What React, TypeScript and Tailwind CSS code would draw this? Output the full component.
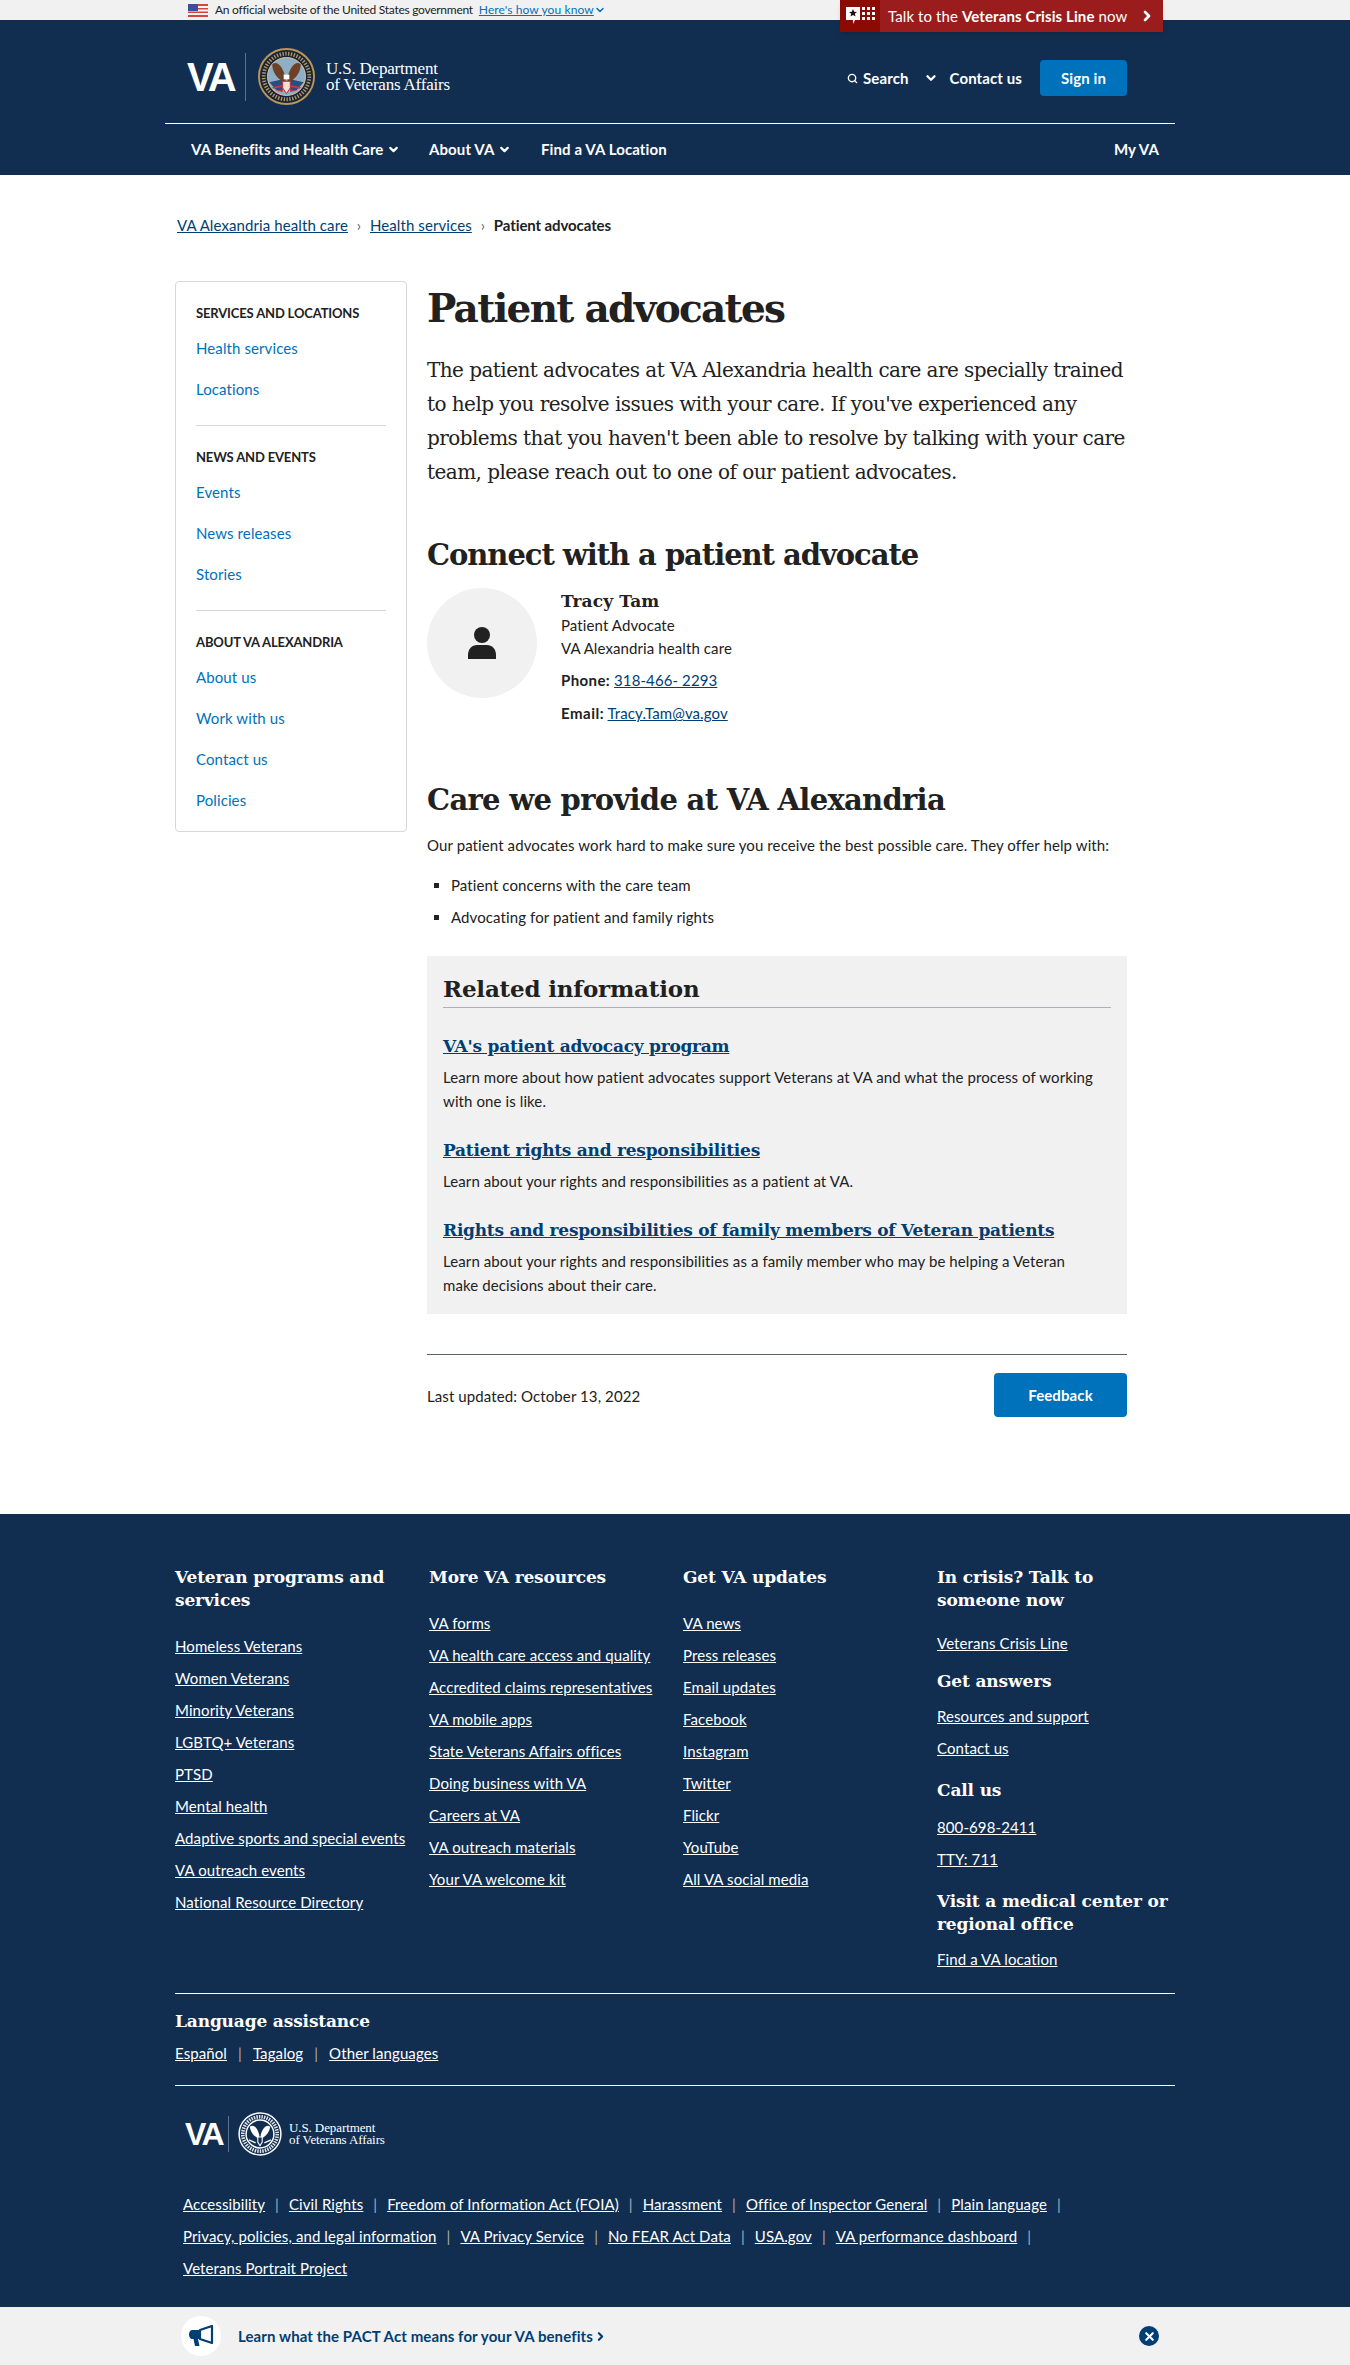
import { ChevronDown, ChevronRight, Search, X } from "lucide-react";

const sans = "font-['Lato','Noto_Sans',sans-serif]";
const slab = "font-['DejaVu_Serif',serif]";

const sideNav = [
  { title: "SERVICES AND LOCATIONS", links: ["Health services", "Locations"] },
  { title: "NEWS AND EVENTS", links: ["Events", "News releases", "Stories"] },
  { title: "ABOUT VA ALEXANDRIA", links: ["About us", "Work with us", "Contact us", "Policies"] },
];

const related = [
  {
    title: "VA's patient advocacy program",
    text: "Learn more about how patient advocates support Veterans at VA and what the process of working with one is like.",
  },
  {
    title: "Patient rights and responsibilities",
    text: "Learn about your rights and responsibilities as a patient at VA.",
  },
  {
    title: "Rights and responsibilities of family members of Veteran patients",
    text: "Learn about your rights and responsibilities as a family member who may be helping a Veteran make decisions about their care.",
  },
];

const programs = [
  "Homeless Veterans",
  "Women Veterans",
  "Minority Veterans",
  "LGBTQ+ Veterans",
  "PTSD",
  "Mental health",
  "Adaptive sports and special events",
  "VA outreach events",
  "National Resource Directory",
];
const resources = [
  "VA forms",
  "VA health care access and quality",
  "Accredited claims representatives",
  "VA mobile apps",
  "State Veterans Affairs offices",
  "Doing business with VA",
  "Careers at VA",
  "VA outreach materials",
  "Your VA welcome kit",
];
const updates = [
  "VA news",
  "Press releases",
  "Email updates",
  "Facebook",
  "Instagram",
  "Twitter",
  "Flickr",
  "YouTube",
  "All VA social media",
];
const legal = [
  ["Accessibility", "Civil Rights", "Freedom of Information Act (FOIA)", "Harassment", "Office of Inspector General", "Plain language"],
  ["Privacy, policies, and legal information", "VA Privacy Service", "No FEAR Act Data", "USA.gov", "VA performance dashboard"],
];

const ColorSeal = () => (
  <svg width="57" height="57" viewBox="0 0 60 60" className="shrink-0">
    <circle cx="30" cy="30" r="29" fill="#1a2233" stroke="#b8975a" strokeWidth="2" />
    <circle cx="30" cy="30" r="24" fill="none" stroke="#a89468" strokeWidth="4" strokeDasharray="1.5 1.5" />
    <circle cx="30" cy="30" r="20" fill="#8fb0c4" stroke="#d8c9a0" strokeWidth="1" />
    <path d="M12 36l14-3v13l-7-2zM48 36l-14-3v13l7-2z" fill="#2f4a7c" />
    <path d="M15 41l11-2v2l-10 2zM18 45l8-1v2zM45 41l-11-2v2l10 2zM42 45l-8-1v2z" fill="#c23a3a" />
    <path d="M29 31C26 19 20 13 15 17c0 8 5 15 11 18l3 2zM31 31c3-12 9-18 14-14 0 8-5 15-11 18l-3 2z" fill="#6e4025" />
    <path d="M27 28h6v5h-6z" fill="#ffffff" />
    <path d="M26 35h8v7l-4 6-4-6z" fill="#f1e4d2" stroke="#b3282d" strokeWidth="1" />
  </svg>
);

const MonoSeal = () => (
  <svg width="44" height="44" viewBox="0 0 60 60" className="shrink-0">
    <circle cx="30" cy="30" r="28.5" fill="#112e51" stroke="#ffffff" strokeWidth="2" />
    <circle cx="30" cy="30" r="23.5" fill="none" stroke="#dfe3e8" strokeWidth="5" strokeDasharray="2 1.5" />
    <circle cx="30" cy="30" r="19" fill="#112e51" stroke="#ffffff" strokeWidth="2" />
    <path d="M29 31C26 21 21 16 16 20c1 7 5 12 10 15l3 2zM31 31c3-10 8-15 13-11-1 7-5 12-10 15l-3 2z" fill="#ffffff" />
    <path d="M27 34h6v7l-3 5-3-5z" fill="#112e51" stroke="#ffffff" strokeWidth="1.500" />
    <path d="M15 38l9 4M45 38l-9 4" stroke="#ffffff" strokeWidth="2" />
  </svg>
);

const FlagIcon = () => (
  <svg width="20" height="13" viewBox="0 0 20 13" className="shrink-0">
    <rect width="20" height="13" fill="#f4f4f4" />
    <path d="M0 0h20v2H0zM0 4h20v1.500H0zM0 7.500h20V9H0zM0 11h20v2H0z" fill="#d8453c" />
    <rect width="10" height="7" fill="#3d4fa1" />
  </svg>
);

const CrisisIcon = () => (
  <svg width="29" height="20" viewBox="0 0 29 20">
    <path d="M0 1h14v13H9l-2 4v-4H0z" fill="#ffffff" />
    <path d="M7 3l1.200 2.700 2.800.2-2.200 1.800.8 2.800L7 9l-2.600 1.500.8-2.800L3 5.900l2.800-.2z" fill="#21100c" />
    <g fill="#ffffff">
      <rect x="16" y="1" width="3" height="3" /><rect x="21" y="1" width="3" height="3" /><rect x="26" y="1" width="3" height="3" />
      <rect x="16" y="6" width="3" height="3" /><rect x="21" y="6" width="3" height="3" /><rect x="26" y="6" width="3" height="3" />
      <rect x="16" y="11" width="3" height="3" /><rect x="21" y="11" width="3" height="3" /><rect x="26" y="11" width="3" height="3" />
    </g>
  </svg>
);

const PersonIcon = () => (
  <svg width="28" height="32" viewBox="0 0 28 32">
    <circle cx="14" cy="8" r="8" fill="#212121" />
    <path d="M0 32v-4c0-6 4-10 9-10h10c5 0 9 4 9 10v4z" fill="#212121" />
  </svg>
);

const BullhornIcon = () => (
  <svg width="25" height="22" viewBox="0 0 25 22">
    <path d="M3 5h8v9H9l1.500 7H6l-1.500-7H3a3 3 0 0 1-1-.2C.8 13 0 11.500 0 9.500S1 5 3 5z" fill="#003e73" />
    <path d="M11 5l12-4v17l-12-4z" fill="none" stroke="#003e73" strokeWidth="2.200" strokeLinejoin="round" />
  </svg>
);

const FooterHeading = ({ children }: { children: string }) => (
  <h2 className={`${slab} text-[17px] leading-[23px] font-bold tracking-[-0.15px] text-white`}>{children}</h2>
);

const FooterLink = ({ children }: { children: string }) => (
  <div className="h-8 leading-8">
    <a href="#" className="underline text-white">{children}</a>
  </div>
);

const FooterColumn = ({ title, links }: { title: string; links: string[] }) => (
  <div className="w-[254px]">
    <div className="w-[230px]">
      <FooterHeading>{title}</FooterHeading>
    </div>
    <div className="mt-[18px]">
      {links.map((link) => (
        <FooterLink key={link}>{link}</FooterLink>
      ))}
    </div>
  </div>
);

export default function App() {
  return (
    <div className={`${sans} text-[15px] tracking-[0.1px] text-[#212121] bg-white w-[1350px] h-[2365px] overflow-hidden relative`}>
      {/* gov banner */}
      <div className="h-5 bg-[#f1f1f1]">
        <div className="w-[1010px] ml-[165px] pl-[23px] h-5 flex items-center gap-[6px] text-[12px]">
          <FlagIcon />
          <span className="ml-[1px] tracking-[-0.27px]">An official website of the United States government</span>
          <a href="#" className="underline text-[#0071bb] flex items-center">
            Here's how you know
            <ChevronDown size={12} strokeWidth={3} />
          </a>
        </div>
      </div>

      {/* crisis line tab sits over the header */}
      <a href="#" className="absolute left-[840px] top-0 w-[323px] h-8 bg-[#9b1c1c] text-white flex items-center shadow-md z-10 text-[15px]">
        <span className="w-10 h-8 bg-[#8b0a03] flex items-center justify-center shrink-0">
          <CrisisIcon />
        </span>
        <span className="ml-[8px]">Talk to the <b>Veterans Crisis Line</b> now</span>
        <ChevronRight size={16} strokeWidth={4} className="absolute right-[8px] top-[8px]" />
      </a>

      {/* header */}
      <header className="bg-[#112e51] h-[155px] text-white">
        <div className="w-[1010px] ml-[165px]">
          <div className="h-[104px] flex items-start justify-between border-b border-white pr-[48px] pl-[22px]">
            <div className="flex items-center mt-[28px]">
              <span className="font-['Liberation_Sans',sans-serif] font-bold text-[40px] leading-[48px] tracking-[-3px] w-[58px]">VA</span>
              <span className="w-px h-[48px] bg-[#5b728f]" />
              <span className="ml-[12px]"><ColorSeal /></span>
              <span className="ml-[11px] font-['Liberation_Serif',serif] text-[17px] leading-[16px] tracking-[-0.2px]">
                U.S. Department
                <br />
                of Veterans Affairs
              </span>
            </div>
            <div className="flex items-center mt-[40px] font-bold text-[15px] h-9">
              <Search size={11} strokeWidth={3} />
              <span className="ml-[5px]">Search</span>
              <ChevronDown size={14} strokeWidth={4} className="ml-[15px]" />
              <span className="ml-[12px]">Contact us</span>
              <a href="#" className="ml-[18px] w-[87px] h-9 rounded bg-[#0071bb] flex items-center justify-center">Sign in</a>
            </div>
          </div>
          <nav className="h-[50px] flex items-center font-bold text-[15px] pl-[26px] pr-[16px]">
            <span className="flex items-center w-[238px]">
              VA Benefits and Health Care
              <ChevronDown size={13} strokeWidth={4} className="ml-[4px]" />
            </span>
            <span className="flex items-center w-[112px]">
              About VA
              <ChevronDown size={13} strokeWidth={4} className="ml-[4px]" />
            </span>
            <span>Find a VA Location</span>
            <span className="ml-auto">My VA</span>
          </nav>
        </div>
      </header>

      <div className="w-[1000px] mx-auto">
        {/* breadcrumbs */}
        <div className="h-[106px] pt-[39px] pl-[2px] text-[15px] leading-[22px] flex gap-[4px]">
          <a href="#" className="underline text-[#003e73]">VA Alexandria health care</a>
          <span className="text-[#5b616b] w-[14px] text-center">›</span>
          <a href="#" className="underline text-[#003e73]">Health services</a>
          <span className="text-[#5b616b] w-[14px] text-center">›</span>
          <span className="font-bold tracking-[-0.1px]">Patient advocates</span>
        </div>

        <div className="flex gap-[20px]">
          {/* side nav */}
          <aside className="w-[232px] h-[551px] border border-[#d6d7d9] rounded shrink-0 px-[20px] pt-[21px]">
            {sideNav.map((section, i) => (
              <div key={section.title} className={i > 0 ? "border-t border-[#d6d7d9] mt-[15px] pt-[21px]" : ""}>
                <h3 className="text-[13px] font-bold leading-[20px] tracking-[-0.15px] mb-[5px]">{section.title}</h3>
                {section.links.map((link) => (
                  <div key={link} className="h-[41px] leading-[41px]">
                    <a href="#" className="text-[#0071bb] text-[15px]">{link}</a>
                  </div>
                ))}
              </div>
            ))}
          </aside>

          {/* main */}
          <main className="w-[700px]">
            <h1 className={`${slab} text-[39px] leading-[52px] font-bold tracking-[-1.7px] mt-[1px]`}>Patient advocates</h1>
            <p className={`${slab} text-[20px] leading-[34px] tracking-[-0.55px] mt-[19px]`}>
              The patient advocates at VA Alexandria health care are specially trained to help you resolve issues with your care. If you've experienced any problems that you haven't been able to resolve by talking with your care team, please reach out to one of our patient advocates.
            </p>

            <h2 className={`${slab} text-[29px] leading-[40px] font-bold tracking-[-1.05px] mt-[46px]`}>Connect with a patient advocate</h2>
            <div className="flex mt-[13px] h-[192px]">
              <div className="w-[110px] h-[110px] rounded-full bg-[#f1f1f1] flex items-center justify-center shrink-0">
                <PersonIcon />
              </div>
              <div className="ml-[24px] pt-[1px]">
                <div className={`${slab} font-bold text-[17px] leading-[24px]`}>Tracy Tam</div>
                <div className="leading-[23px] mt-[1px]">Patient Advocate</div>
                <div className="leading-[23px]">VA Alexandria health care</div>
                <div className="leading-[24px] mt-[8px]">
                  <b className="tracking-[0.4px]">Phone:</b> <a href="#" className="underline text-[#003e73]">318-466- 2293</a>
                </div>
                <div className="leading-[24px] mt-[9px]">
                  <b className="tracking-[0.5px]">Email:</b> <a href="#" className="underline text-[#003e73]">Tracy.Tam@va.gov</a>
                </div>
              </div>
            </div>

            <h2 className={`${slab} text-[29px] leading-[40px] font-bold tracking-[-0.7px]`}>Care we provide at VA Alexandria</h2>
            <p className="leading-[24px] mt-[13px]">Our patient advocates work hard to make sure you receive the best possible care. They offer help with:</p>
            <ul className="list-[square] pl-[24px] mt-[12px]">
              <li className="h-8 leading-8">Patient concerns with the care team</li>
              <li className="h-8 leading-8">Advocating for patient and family rights</li>
            </ul>

            {/* related info */}
            <section className="bg-[#f1f1f1] h-[358px] mt-[23px] px-[16px] pt-[18px]">
              <h2 className={`${slab} text-[23px] leading-[30px] font-bold tracking-[-0.2px] border-b border-[#aeb0b5] h-[34px]`}>Related information</h2>
              <div className="mt-[25px]">
                {related.map((item) => (
                  <div key={item.title} className="mb-[24px]">
                    <a href="#" className={`${slab} font-bold text-[17px] leading-[26px] underline text-[#003e73] tracking-[-0.25px] block`}>{item.title}</a>
                    <p className="leading-[24px] mt-[6px] w-[650px]">{item.text}</p>
                  </div>
                ))}
              </div>
            </section>

            <div className="mt-[40px] border-t border-[#5b616b] h-[160px] pt-[18px] flex justify-between items-start">
              <span className="mt-[11px] leading-[24px]">Last updated: October 13, 2022</span>
              <a href="#" className="w-[133px] h-[44px] rounded bg-[#0071bb] text-white font-bold flex items-center justify-center">Feedback</a>
            </div>
          </main>
        </div>
      </div>

      {/* footer */}
      <footer className="absolute top-[1514px] left-0 w-full h-[793px] bg-[#112e51] text-white text-[15px]">
        <div className="w-[1000px] mx-auto pt-[52px]">
          <div className="flex h-[427px]">
            <FooterColumn title="Veteran programs and services" links={programs} />
            <FooterColumn title="More VA resources" links={resources} />
            <FooterColumn title="Get VA updates" links={updates} />
            <div className="w-[238px]">
              <FooterHeading>In crisis? Talk to someone now</FooterHeading>
              <div className="mt-[15px]"><FooterLink>Veterans Crisis Line</FooterLink></div>
              <div className="mt-[11px]"><FooterHeading>Get answers</FooterHeading></div>
              <div className="mt-[7px]">
                <FooterLink>Resources and support</FooterLink>
                <FooterLink>Contact us</FooterLink>
              </div>
              <div className="mt-[15px]"><FooterHeading>Call us</FooterHeading></div>
              <div className="mt-[9px]">
                <FooterLink>800-698-2411</FooterLink>
                <FooterLink>TTY: 711</FooterLink>
              </div>
              <div className="mt-[15px]"><FooterHeading>Visit a medical center or regional office</FooterHeading></div>
              <div className="mt-[7px]"><FooterLink>Find a VA location</FooterLink></div>
            </div>
          </div>

          <div className="border-t border-white pt-[16px] h-[92px]">
            <FooterHeading>Language assistance</FooterHeading>
            <div className="flex items-center mt-[8px] leading-[24px]">
              <a href="#" className="underline">Español</a>
              <span className="mx-[11px] text-[#aeb0b5]">|</span>
              <a href="#" className="underline">Tagalog</a>
              <span className="mx-[11px] text-[#aeb0b5]">|</span>
              <a href="#" className="underline">Other languages</a>
            </div>
          </div>

          <div className="border-t border-white pl-[10px] h-[201px]">
            <div className="flex items-center mt-[26px] h-[44px]">
              <span className="font-['Liberation_Sans',sans-serif] font-bold text-[32px] leading-[40px] tracking-[-2.5px] w-[43px]">VA</span>
              <span className="w-px h-[36px] bg-[#5b728f]" />
              <span className="ml-[9px]"><MonoSeal /></span>
              <span className="ml-[7px] font-['Liberation_Serif',serif] text-[13px] leading-[12px] tracking-[-0.1px]">
                U.S. Department
                <br />
                of Veterans Affairs
              </span>
            </div>
            <div className="mt-[32px] -ml-[2px]">
              {legal.map((row, i) => (
                <div key={i} className="flex items-center h-8">
                  {row.map((link) => (
                    <span key={link} className="flex items-center">
                      <a href="#" className="underline">{link}</a>
                      <span className="mx-[10px] text-[#aeb0b5]">|</span>
                    </span>
                  ))}
                </div>
              ))}
              <div className="h-8 leading-8"><a href="#" className="underline">Veterans Portrait Project</a></div>
            </div>
          </div>
        </div>
      </footer>

      {/* PACT act promo */}
      <div className="absolute top-[2307px] left-0 w-full h-[58px] bg-[#f1f1f1]">
        <div className="w-[1000px] mx-auto h-full flex items-center relative pl-[6px]">
          <span className="w-10 h-10 rounded-full bg-white flex items-center justify-center">
            <BullhornIcon />
          </span>
          <a href="#" className="ml-[17px] font-bold text-[#003e73] flex items-center text-[15px]">
            Learn what the PACT Act means for your VA benefits
            <ChevronRight size={13} strokeWidth={4} className="ml-[1px]" />
          </a>
          <span className="absolute left-[964px] top-[19px] w-5 h-5 rounded-full bg-[#003e73] flex items-center justify-center">
            <X size={13} strokeWidth={4} className="text-white" />
          </span>
        </div>
      </div>
    </div>
  );
}
